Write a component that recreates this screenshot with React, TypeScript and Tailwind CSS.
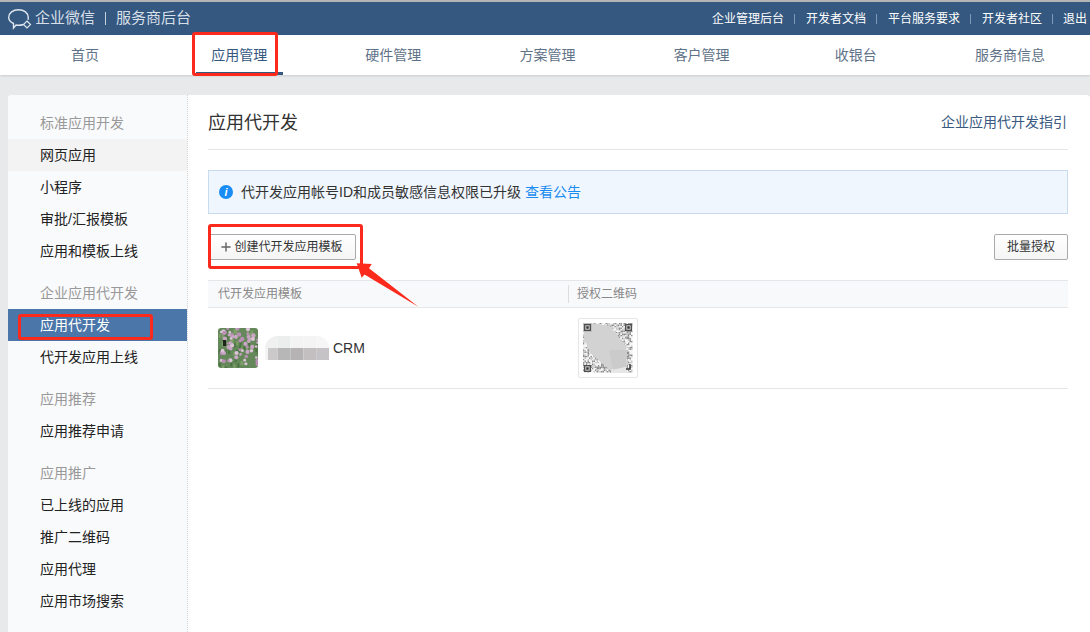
import React from 'react';
import { Plus } from 'lucide-react';

const font = 'font-["Liberation_Sans","Noto_Sans_CJK_SC",sans-serif]';

const navItems = ['首页', '应用管理', '硬件管理', '方案管理', '客户管理', '收银台', '服务商信息'];
const topLinks = ['企业管理后台', '开发者文档', '平台服务要求', '开发者社区', '退出'];

const sideGroups = [
  { title: '标准应用开发', items: ['网页应用', '小程序', '审批/汇报模板', '应用和模板上线'] },
  { title: '企业应用代开发', items: ['应用代开发', '代开发应用上线'] },
  { title: '应用推荐', items: ['应用推荐申请'] },
  { title: '应用推广', items: ['已上线的应用', '推广二维码', '应用代理', '应用市场搜索'] },
];

// small seeded random so the noise in the drawings stays the same
const rnd = (seed: number) => {
  const v = Math.sin(seed * 127.1 + 11.7) * 43758.5453;
  return v - Math.floor(v);
};

const Logo = () => (
  <svg width="26" height="22" viewBox="0 0 26 22" fill="none" stroke="#dfe6ee" strokeWidth="1.4">
    <path d="M15.500 16.500C14 17 12.500 17.300 10.500 17.300C9.500 17.300 8.700 17.200 8 17L5.500 20L5.500 15.500C2.500 14 .7 12 .7 9.500C.7 5 5 1.700 10.500 1.700C16 1.700 20.300 5 20.300 9.500C20.300 10.300 20.200 11 20 11.700" />
    <path d="M19 13L22.500 16.500L19 20L15.500 16.500z" strokeWidth="1.200" />
  </svg>
);

const Photo = () => {
  const dots = Array.from({ length: 58 }, (_, i) => ({
    x: rnd(i + 1) * 40,
    y: rnd(i + 101) * 36,
    r: 1.200 + rnd(i + 201) * 1.100,
    c: i % 3 === 0 ? '#c9a5c5' : i % 3 === 1 ? '#b98fb3' : '#dcc4d9',
  }));
  const leaves = Array.from({ length: 50 }, (_, i) => ({
    x: rnd(i + 301) * 40,
    y: rnd(i + 401) * 40,
    c: i % 2 === 0 ? '#4a7440' : '#7f9f68',
  }));
  return (
    <div className="w-10 h-10 rounded-[3px] overflow-hidden shrink-0">
      <svg width="40" height="40" viewBox="0 0 40 40" className="blur-[0.7px]">
        <rect width="40" height="40" fill="#64885a" />
        {leaves.map((l, i) => (
          <rect key={i} x={l.x} y={l.y} width="2" height="4" fill={l.c} />
        ))}
        {dots.map((d, i) => (
          <circle key={i} cx={d.x} cy={d.y} r={d.r} fill={d.c} />
        ))}
        <rect x="5" y="12" width="3" height="6" fill="#1d2418" />
      </svg>
    </div>
  );
};

const BlurName = () => {
  const top = ['#f0f0f0', '#eceeee', '#f3f3f3', '#f4f4f4', '#f6f6f6'];
  const bottom = ['#cbc9c9', '#b8b7b7', '#b5b3b3', '#c3bebf', '#c5c3c5'];
  return (
    <svg width="64" height="24" viewBox="0 0 64 24" className="shrink-0">
      {top.map((c, i) => (
        <rect key={i} x={i * 12.800} y="0" width="12.800" height="12" fill={c} />
      ))}
      {bottom.map((c, i) => (
        <rect key={i} x={i === 0 ? 3 : i * 12.800} y="12" width={i === 0 ? 9.800 : 12.800} height="12" fill={c} />
      ))}
      <path d="M0 0h12C6 0 0 6 0 12zM64 0h-12c6 0 12 4 12 12z" fill="#fff" />
      <path d="M0 12h3v12H0z" fill="#f4f4f4" />
    </svg>
  );
};

const QrCode = () => {
  const cells = [];
  for (let y = 0; y < 33; y++) {
    for (let x = 0; x < 33; x++) {
      const r = rnd(x * 31 + y * 7 + 3);
      cells.push(<rect key={`${x}-${y}`} x={x * 1.500} y={y * 1.500} width="1.500" height="1.500" fill={r > 0.7 ? '#8f8f8f' : r > 0.4 ? '#c8c8c8' : '#f4f4f4'} />);
    }
  }
  const finder = (x: number, y: number) => (
    <g>
      <rect x={x} y={y} width="7" height="7" fill="#4f4f4f" />
      <rect x={x + 1.300} y={y + 1.300} width="4.400" height="4.400" fill="#cfcfcf" />
      <rect x={x + 2.300} y={y + 2.300} width="2.400" height="2.400" fill="#333" />
    </g>
  );
  return (
    <svg width="50" height="50" viewBox="0 0 50 50">
      {cells}
      <path d="M7 0L27 3L43 23L44 43L27 47L7 30L0 12z" fill="#d2d2d2" />
      <rect x="0" y="0" width="9" height="9" fill="#bdbdbd" />
      <path d="M26 27H43V44L30 47z" fill="#cbcbcb" />
      <path d="M27 47L43 44L46 50H30z" fill="#e6e6e6" />
      {finder(1, 1)}
      {finder(42, 1)}
      {finder(1, 42)}
      <path d="M43 46h4v-5" fill="none" stroke="#333" strokeWidth="1.500" />
    </svg>
  );
};

const App = () => {
  return (
    <div className={`relative w-[1090px] h-[632px] overflow-hidden bg-[#e8e9eb] text-[14px] ${font}`}>
      <div className="h-[2px] bg-[#b4b4b4]" />
      <header className="h-[33px] bg-[#34587f] flex items-center justify-between pl-2 pr-[3px]">
        <div className="flex items-center text-[15px] text-[#d7dfe8]">
          <Logo />
          <span className="ml-[1px]">企业微信</span>
          <span className="mx-[10px] w-px h-[13px] bg-[#c6d1dd]" />
          <span>服务商后台</span>
        </div>
        <div className="flex items-center text-[12px] text-white">
          {topLinks.map((t, i) => (
            <React.Fragment key={t}>
              {i > 0 && <span className={`${i === 4 ? 'mx-[10px]' : 'mx-[10.5px]'} w-px h-[10px] bg-[#7f9ab8]`} />}
              <span>{t}</span>
            </React.Fragment>
          ))}
        </div>
      </header>

      <nav className="h-[40px] bg-white shadow-[0_1px_2px_rgba(0,0,0,0.12)] flex pl-2 pr-[3px]">
        {navItems.map((t) => (
          <div key={t} className="flex-1 flex justify-center">
            <div
              className={`h-full flex items-center justify-center ${t === '应用管理' ? 'w-[87px] text-[#34587f] border-b-[3px] border-[#34587f] pt-[3px]' : 'text-[#5f7288]'}`}
            >
              {t}
            </div>
          </div>
        ))}
      </nav>

      <div className="mt-[20px] ml-2 h-[537px] bg-white rounded-tl-[4px] rounded-tr-[4px] flex">
        <aside className="w-[180px] bg-[#f9fafc] border-r border-dotted border-[#d5d5d5] pt-3 rounded-tl-[4px] shrink-0">
          {sideGroups.map((g) => (
            <div key={g.title} className="mb-[10px]">
              <div className="h-8 leading-8 pl-8 text-[#999999]">{g.title}</div>
              {g.items.map((t) => (
                <div
                  key={t}
                  className={`h-8 leading-8 pl-8 ${t === '应用代开发' ? 'bg-[#4a76aa] text-white' : t === '网页应用' ? 'bg-[#f3f3f3] text-[#222222]' : 'text-[#222222]'}`}
                >
                  {t}
                </div>
              ))}
            </div>
          ))}
        </aside>

        <main className="flex-1 px-5 min-w-0 pr-[22px]">
          <div className="h-[55px] border-b border-[#e4e6e9] flex items-center justify-between">
            <h1 className="text-[18px] text-[#333333] pt-[3px]">应用代开发</h1>
            <a className="text-[#3a5a7f] pt-px pr-px">企业应用代开发指引</a>
          </div>

          <div className="mt-5 h-[44px] bg-[#f0f6fd] border border-[#c9dbf0] flex items-center pl-[10px]">
            <span className="w-[14px] h-[14px] rounded-full bg-[#1a8cf5] text-white text-[11px] italic font-bold leading-[14px] text-center shrink-0">i</span>
            <span className="ml-2 text-[#333333]">代开发应用帐号ID和成员敏感信息权限已升级</span>
            <a className="ml-1 text-[#1a8cf0]">查看公告</a>
          </div>

          <div className="mt-5 flex justify-between">
            <button className="h-[26px] w-[148px] border border-[#aaaaaa] rounded-[2px] bg-gradient-to-b from-white to-[#f5f5f5] flex items-center justify-center text-[12px] text-[#333333]">
              <Plus size={14} strokeWidth={2.5} className="text-[#666666] mr-[1px] -ml-[2px]" />
              创建代开发应用模板
            </button>
            <button className="h-[26px] w-[74px] border border-[#aaaaaa] rounded-[2px] bg-gradient-to-b from-white to-[#f5f5f5] text-[12px] text-[#333333]">
              批量授权
            </button>
          </div>

          <div className="mt-5 h-[28px] bg-[#f8f9fb] border-y border-[#e4e6e9] flex items-center text-[12px] text-[#888888]">
            <div className="w-[361px] h-[18px] leading-[18px] pl-[10px] border-r border-[#dddddd]">代开发应用模板</div>
            <div className="pl-2">授权二维码</div>
          </div>

          <div className="h-[81px] border-b border-[#e4e6e9] flex items-center">
            <div className="w-[361px] pl-[10px] flex items-center">
              <Photo />
              <span className="ml-[7px]"><BlurName /></span>
              <span className="ml-1 text-[#333333]">CRM</span>
            </div>
            <div className="ml-[9px] w-[60px] h-[60px] border border-[#e6e6e6] rounded-[2px] flex items-center justify-center">
              <QrCode />
            </div>
          </div>
        </main>
      </div>

      {/* red annotations drawn over the screenshot */}
      <div className="absolute left-[192px] top-[32px] w-[86px] h-[44px] border-[3px] border-[#fb2a1c] rounded-[3px]" />
      <div className="absolute left-[18px] top-[314px] w-[135px] h-[26px] border-[3px] border-[#fb2a1c] rounded-[3px]" />
      <div className="absolute left-[208px] top-[224px] w-[155px] h-[45px] border-[3px] border-[#fb2a1c] rounded-[3px]" />
      <svg className="absolute left-[350px] top-[258px]" width="75" height="55" viewBox="0 0 75 55">
        <path d="M6.700 5.300L21.700 6L19 10.300L68.300 48.700L14.500 16.500L11.700 19.700z" fill="#fb2a1c" />
      </svg>
    </div>
  );
};

export default App;
